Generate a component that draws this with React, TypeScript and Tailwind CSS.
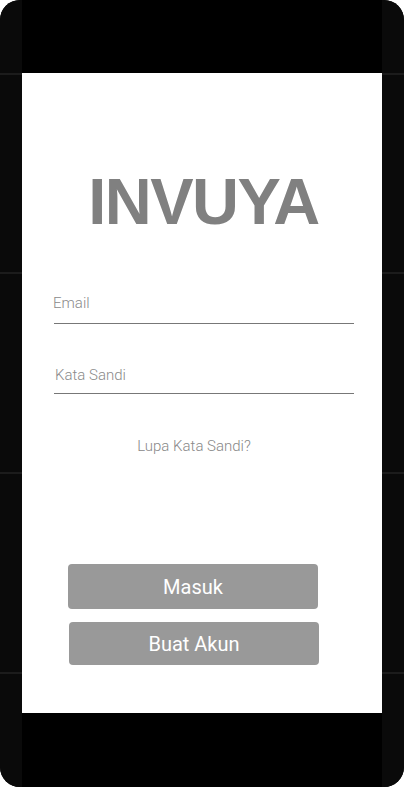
function SideRail() {
  return (
    <div className="flex w-[22px] flex-col bg-[#0a0a0a]">
      <div className="h-[73px]" />
      <div className="h-[2px] bg-[#1c1c1c]" />
      <div className="h-[197px]" />
      <div className="h-[2px] bg-[#1c1c1c]" />
      <div className="h-[198px]" />
      <div className="h-[2px] bg-[#1c1c1c]" />
      <div className="h-[198px]" />
      <div className="h-[2px] bg-[#1c1c1c]" />
    </div>
  );
}

export default function App() {
  return (
    <div className="h-[787px] w-[404px] bg-white">
      <div className="flex h-full w-full overflow-hidden rounded-[20px] bg-[#0a0a0a]">
        <SideRail />
        <div className="flex w-[360px] flex-col bg-black">
          <div className="h-[73px]" />
          <div className="flex h-[640px] flex-col bg-white font-['Roboto',sans-serif]">
            <h1 className="mt-[92px] pl-[3px] text-center font-['Liberation_Sans',Arial,sans-serif] text-[65px] font-bold leading-[74px] tracking-[-1.5px] text-[#808080]">
              INVUYA
            </h1>
            <div className="mt-[54px] pl-[32px] pr-[28px]">
              <div className="-ml-[1px] text-[15px] font-light leading-[20px] text-[#8a8a8a]">Email</div>
              <div className="mt-[10px] h-[1px] bg-[#777]" />
              <div className="mt-[41px] pl-[1px] text-[15px] font-light leading-[20px] text-[#8a8a8a]">Kata Sandi</div>
              <div className="mt-[8px] h-[1px] bg-[#777]" />
            </div>
            <div className="mt-[42px] pr-[16px] text-center text-[15px] font-light leading-[20px] text-[#888]">
              Lupa Kata Sandi?
            </div>
            <div className="mt-[108px] flex flex-col items-center gap-[13px] pl-[46px] pr-[64px]">
              <button className="h-[45px] w-[250px] rounded-[4px] bg-[#999] text-[20px] text-white">Masuk</button>
              <button className="ml-[2px] h-[43px] w-[250px] rounded-[4px] bg-[#999] text-[20px] text-white">Buat Akun</button>
            </div>
          </div>
        </div>
        <SideRail />
      </div>
    </div>
  );
}
